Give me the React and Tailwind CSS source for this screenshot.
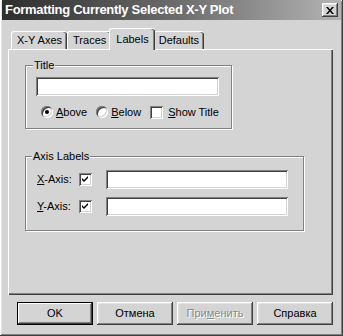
import React from "react";

const raised =
  "shadow-[inset_-1px_-1px_#404040,inset_1px_1px_#ffffff,inset_-2px_-2px_#808080,inset_2px_2px_#e4e4e4]";
const sunken =
  "shadow-[inset_1px_1px_#808080,inset_-1px_-1px_#ffffff,inset_2px_2px_#404040,inset_-2px_-2px_#d4d4d4]";

const U = ({ children }) => <span className="underline underline-offset-[1px]">{children}</span>;

const Radio = ({ checked }) => (
  <span className="w-[12px] h-[12px] rounded-full bg-white flex items-center justify-center shrink-0 shadow-[inset_1px_1px_#808080,inset_-1px_-1px_#ffffff,inset_2px_2px_#404040,inset_-2px_-2px_#d4d4d4]">
    {checked && <span className="w-[4px] h-[4px] rounded-full bg-black" />}
  </span>
);

const Check = ({ checked }) => (
  <span className={`w-[13px] h-[13px] bg-white flex items-center justify-center shrink-0 ${sunken}`}>
    {checked && (
      <svg width="7" height="7" viewBox="0 0 7 7">
        <path d="M0 2 L2 4 L6 0 L6 2 L2 6 L0 4 Z" fill="#000" />
      </svg>
    )}
  </span>
);

const Tab = ({ label, active }) => (
  <div
    className={`relative flex items-center whitespace-nowrap bg-[#d4d4d4] rounded-t-[3px] border-l border-t border-white shadow-[inset_-1px_0_#404040,inset_-2px_0_#808080] ${
      active ? "h-[22px] px-[6px] -mx-[2px] mb-[-2px] z-10" : "h-[18px] mt-[3px] px-[5px]"
    }`}
  >
    {label}
  </div>
);

const Button = ({ children, def, disabled }) => (
  <button
    className={`w-[76px] h-[23px] flex items-center justify-center bg-[#d4d4d4] whitespace-nowrap ${
      def
        ? "shadow-[inset_0_0_0_1px_#000,inset_-2px_-2px_#404040,inset_2px_2px_#ffffff,inset_-3px_-3px_#808080]"
        : raised
    } ${disabled ? "text-[#8a8a8a] [text-shadow:1px_1px_#ffffff]" : "text-black"}`}
  >
    {children}
  </button>
);

export default function App() {
  return (
    <div
      className={`w-[343px] h-[336px] bg-[#d4d4d4] flex flex-col p-[2px] text-[11px] text-black ${raised}`}
      style={{ fontFamily: '"Liberation Sans", Arial, sans-serif' }}
    >
      {/* title bar */}
      <div className="h-[20px] -mt-[2px] flex items-center justify-between pl-[3px] pr-[3px] bg-gradient-to-r from-[#2e2e2e] via-[#6a6a6a] to-[#b4b4b4]">
        <span className="text-white font-bold text-[13px] tracking-[-0.3px] whitespace-nowrap">
          Formatting Currently Selected X-Y Plot
        </span>
        <span className={`w-[16px] h-[14px] flex items-center justify-center bg-[#d4d4d4] ${raised}`}>
          <svg width="8" height="7" viewBox="0 0 8 7">
            <path d="M0 0h2l2 2.5L6 0h2L5 3.5 8 7H6L4 4.5 2 7H0l3-3.5z" fill="#000" />
          </svg>
        </span>
      </div>

      <div className="flex flex-col px-[6px] pt-[8px]">
        {/* tabs */}
        <div className="flex items-start pl-[3px] h-[21px]">
          <Tab label="X-Y Axes" />
          <Tab label="Traces" />
          <Tab label="Labels" active />
          <Tab label="Defaults" />
        </div>

        {/* panel */}
        <div className="h-[246px] w-[325px] bg-[#d4d4d4] pt-[9px] pl-[16px] flex flex-col border-l border-t border-white shadow-[inset_-1px_-1px_#404040,inset_-2px_-2px_#808080]">
          <fieldset className="w-[207px] h-[70px] border border-[#808080] shadow-[inset_1px_1px_#ffffff,1px_1px_#ffffff] pl-[10px] pt-[6px] m-0">
            <legend className="-ml-[3px] px-[1px] bg-[#d4d4d4] leading-[12px]">Title</legend>
            <div className={`w-[183px] h-[19px] bg-white ${sunken}`} />
            <div className="flex items-center mt-[9px] pl-[5px] h-[14px] whitespace-nowrap">
              <Radio checked />
              <span className="ml-[3px]">
                <U>A</U>bove
              </span>
              <span className="ml-[9px]">
                <Radio />
              </span>
              <span className="ml-[3px]">
                <U>B</U>elow
              </span>
              <span className="ml-[9px]">
                <Check />
              </span>
              <span className="ml-[5px]">
                <U>S</U>how Title
              </span>
            </div>
          </fieldset>

          <fieldset className="mt-[21px] w-[279px] h-[81px] border border-[#808080] shadow-[inset_1px_1px_#ffffff,1px_1px_#ffffff] pl-[11px] pt-[8px] m-0">
            <legend className="-ml-[5px] px-[1px] bg-[#d4d4d4] leading-[12px]">Axis Labels</legend>
            <div className="flex items-center h-[19px]">
              <span className="w-[42px] whitespace-nowrap">
                <U>X</U>-Axis:
              </span>
              <Check checked />
              <div className={`ml-[14px] w-[182px] h-[19px] bg-white ${sunken}`} />
            </div>
            <div className="flex items-center h-[19px] mt-[8px]">
              <span className="w-[42px] whitespace-nowrap">
                <U>Y</U>-Axis:
              </span>
              <Check checked />
              <div className={`ml-[14px] w-[182px] h-[19px] bg-white ${sunken}`} />
            </div>
          </fieldset>
        </div>

        {/* buttons */}
        <div className="flex gap-[4px] pl-[9px] mt-[7px]">
          <Button def>OK</Button>
          <Button>Отмена</Button>
          <Button disabled>
            При<U>м</U>енить
          </Button>
          <Button>Справка</Button>
        </div>
      </div>
    </div>
  );
}
